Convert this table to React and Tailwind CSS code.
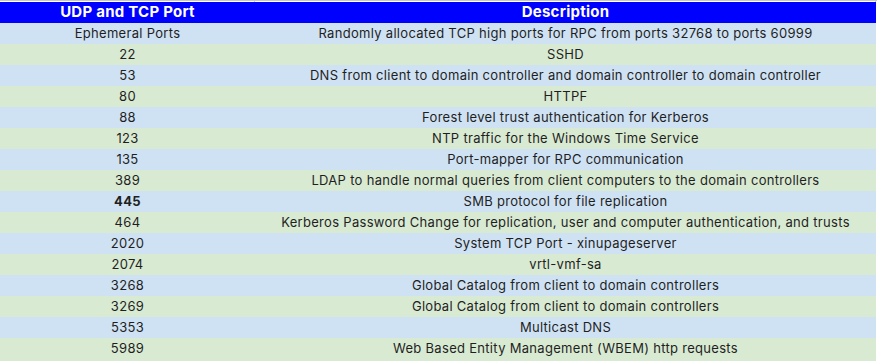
import React from 'react';

const rows = [
  ['Ephemeral Ports', 'Randomly allocated TCP high ports for RPC from ports 32768 to ports 60999'],
  ['22', 'SSHD'],
  ['53', 'DNS from client to domain controller and domain controller to domain controller'],
  ['80', 'HTTPF'],
  ['88', 'Forest level trust authentication for Kerberos'],
  ['123', 'NTP traffic for the Windows Time Service'],
  ['135', 'Port-mapper for RPC communication'],
  ['389', 'LDAP to handle normal queries from client computers to the domain controllers'],
  ['445', 'SMB protocol for file replication', true],
  ['464', 'Kerberos Password Change for replication, user and computer authentication, and trusts'],
  ['2020', 'System TCP Port - xinupageserver'],
  ['2074', 'vrtl-vmf-sa'],
  ['3268', 'Global Catalog from client to domain controllers'],
  ['3269', 'Global Catalog from client to domain controllers'],
  ['5353', 'Multicast DNS'],
  ['5989', 'Web Based Entity Management (WBEM) http requests'],
];

export default function App() {
  return (
    <div className="w-[878px] h-[361px] overflow-hidden bg-white font-['Inter',sans-serif] text-[13px] tracking-[0.3px] text-[#1f1f1f]">
      {/* cut-off row above the header */}
      <div className="flex h-[2px] w-[877px] border-t border-[#c8c8c8]">
        <div className="w-[255px] border-r border-[#c8c8c8]"></div>
        <div className="w-[621px] border-r border-[#c8c8c8]"></div>
      </div>

      <div className="flex h-[21px] w-[876px] items-center bg-[#0000ff] text-[15px] font-bold tracking-[0.25px] text-white">
        <div className="w-[255px] text-center">UDP and TCP Port</div>
        <div className="w-[621px] text-center">Description</div>
      </div>

      {rows.map(([port, desc, bold], i) => (
        <div
          key={port + i}
          className={`flex w-[876px] items-center pt-[1px] ${i === rows.length - 1 ? 'h-[23px] pb-[2px]' : 'h-[21px]'} ${i % 2 === 0 ? 'bg-[#cfe2f3]' : 'bg-[#d9ead3]'}`}
        >
          <div className={`w-[255px] text-center ${bold ? 'font-bold' : ''}`}>{port}</div>
          <div className="w-[621px] text-center whitespace-nowrap">{desc}</div>
        </div>
      ))}
    </div>
  );
}
